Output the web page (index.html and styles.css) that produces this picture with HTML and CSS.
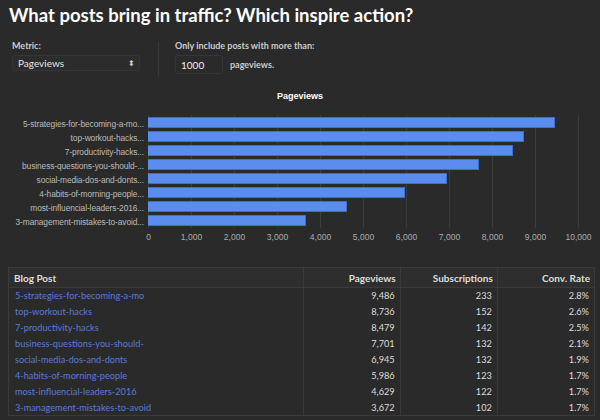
FILE: index.html
```html
<!DOCTYPE html>
<html>
<head>
<meta charset="utf-8">
<link rel="stylesheet" href="styles.css">
</head>
<body>
<h1 class="title">What posts bring in traffic? Which inspire action?</h1>
<div class="controls">
  <div class="control metric">
    <div class="label">Metric:</div>
    <div class="select"><span>Pageviews</span><span class="arrows">&#x2B0D;</span></div>
  </div>
  <div class="divider"></div>
  <div class="control threshold">
    <div class="label">Only include posts with more than:</div>
    <div class="inline"><div class="input">1000</div><span class="unit">pageviews.</span></div>
  </div>
</div>
<div class="chart">
  <div class="chart-title">Pageviews</div>
  <div class="chart-body">
    <div class="ylabels">
      <div>5-strategies-for-becoming-a-mo...</div>
      <div>top-workout-hacks...</div>
      <div>7-productivity-hacks...</div>
      <div>business-questions-you-should-...</div>
      <div>social-media-dos-and-donts...</div>
      <div>4-habits-of-morning-people...</div>
      <div>most-influencial-leaders-2016...</div>
      <div>3-management-mistakes-to-avoid...</div>
    </div>
    <div class="plot-wrap">
      <div class="plot">
        <div class="bar" style="width:407px"></div>
        <div class="bar" style="width:376px"></div>
        <div class="bar" style="width:365px"></div>
        <div class="bar" style="width:331px"></div>
        <div class="bar" style="width:299px"></div>
        <div class="bar" style="width:257px"></div>
        <div class="bar" style="width:199px"></div>
        <div class="bar" style="width:158px"></div>
      </div>
      <div class="xaxis">
        <span>0</span><span>1,000</span><span>2,000</span><span>3,000</span><span>4,000</span><span>5,000</span><span>6,000</span><span>7,000</span><span>8,000</span><span>9,000</span><span>10,000</span>
      </div>
    </div>
  </div>
</div>
<table class="data">
  <thead>
    <tr><th class="post">Blog Post</th><th>Pageviews</th><th>Subscriptions</th><th>Conv. Rate</th></tr>
  </thead>
  <tbody>
    <tr><td class="post"><a>5-strategies-for-becoming-a-mo</a></td><td>9,486</td><td>233</td><td>2.8%</td></tr>
    <tr><td class="post"><a>top-workout-hacks</a></td><td>8,736</td><td>152</td><td>2.6%</td></tr>
    <tr><td class="post"><a>7-productivity-hacks</a></td><td>8,479</td><td>142</td><td>2.5%</td></tr>
    <tr><td class="post"><a>business-questions-you-should-</a></td><td>7,701</td><td>132</td><td>2.1%</td></tr>
    <tr><td class="post"><a>social-media-dos-and-donts</a></td><td>6,945</td><td>132</td><td>1.9%</td></tr>
    <tr><td class="post"><a>4-habits-of-morning-people</a></td><td>5,986</td><td>123</td><td>1.7%</td></tr>
    <tr><td class="post"><a>most-influencial-leaders-2016</a></td><td>4,629</td><td>122</td><td>1.7%</td></tr>
    <tr><td class="post"><a>3-management-mistakes-to-avoid</a></td><td>3,672</td><td>102</td><td>1.7%</td></tr>
  </tbody>
</table>
</body>
</html>
```
FILE: styles.css
```css
* { box-sizing: border-box; }
html, body { margin: 0; padding: 0; background: #2a2a2a; }
body {
  width: 600px; height: 420px; overflow: hidden;
  font-family: "Lato", "Open Sans", sans-serif;
  color: #ddd;
}
.title {
  margin: 0; padding: 3px 0 0 9px;
  font-size: 18.5px; line-height: 24px; font-weight: 700; color: #fff;
}
.controls {
  display: flex; align-items: flex-start;
  padding: 13px 0 0 12px;
}
.label { font-size: 9px; font-weight: 700; color: #ccc; line-height: 12px; }
.metric .select {
  margin-top: 3px; width: 128px; height: 16px;
  border: 1px solid #363636; border-radius: 3px; background: #2c2c2c;
  display: flex; justify-content: space-between; align-items: center;
  padding: 0 4px 0 5px; font-size: 10px; color: #e4e4e4;
}
.arrows { font-size: 8px; color: #ccc; }
.divider { width: 1px; height: 34px; background: #3a3a3a; margin: 2px 16px 0 18px; }
.inline { display: flex; align-items: center; margin-top: 3px; }
.input {
  width: 48px; height: 19px; border: 1px solid #363636; border-radius: 3px;
  background: #2a2a2a; font-size: 10px; color: #eee; padding: 3px 0 0 5px;
}
.unit { margin-left: 7px; font-size: 9px; font-weight: 700; color: #ccc; }

.chart { margin-top: 14px; }
.chart-title {
  text-align: center; font-family: "Liberation Sans", Arial, sans-serif;
  font-size: 9px; font-weight: 700; color: #fff; line-height: 12px;
}
.chart-body { display: flex; margin-top: 13px; }
.ylabels {
  width: 145px; padding-top: 2px;
  font-family: "Liberation Sans", Arial, sans-serif; font-size: 8.4px; color: #bbb;
  text-align: right; letter-spacing: -0.1px;
}
.ylabels div { height: 14px; line-height: 14px; white-space: nowrap; }
.plot-wrap { margin-left: 4px; }
.plot {
  width: 431px; height: 113px; padding-top: 2px;
  background: repeating-linear-gradient(to right, #3c3c3c 0 1px, transparent 1px 43px);
}
.bar {
  height: 11px; margin-bottom: 3px;
  background: #5b8def; border: 1px solid #3f6fc4; border-left: none;
}
.xaxis {
  display: flex; margin-left: -21px; margin-top: 4px;
  font-family: "Liberation Sans", Arial, sans-serif; font-size: 8.5px; color: #aaa;
}
.xaxis span { width: 43px; text-align: center; }

.data {
  margin: 25px 0 0 8px; width: 587px; border-collapse: collapse;
  font-family: "Lato", "Open Sans", sans-serif; font-size: 9.2px;
  border: 1px solid #3a3a3a;
}
.data th {
  background: #2e2e2e; height: 20px; font-weight: 700; color: #ddd; font-size: 10px;
  text-align: right; padding: 0 4px; border: 1px solid #3a3a3a;
}
.data td {
  height: 16px; padding: 0 5px; text-align: right; color: #ddd;
  border-left: 1px solid #3a3a3a; border-right: 1px solid #3a3a3a;
}
.data .post { text-align: left; width: 294px; }
.data th.post { padding-left: 5px; }
.data td.post { padding-left: 6px; }
.data th:nth-child(2), .data th:nth-child(3), .data th:nth-child(4) { width: 97px; }
.data a { color: #5a7bd6; }
```
